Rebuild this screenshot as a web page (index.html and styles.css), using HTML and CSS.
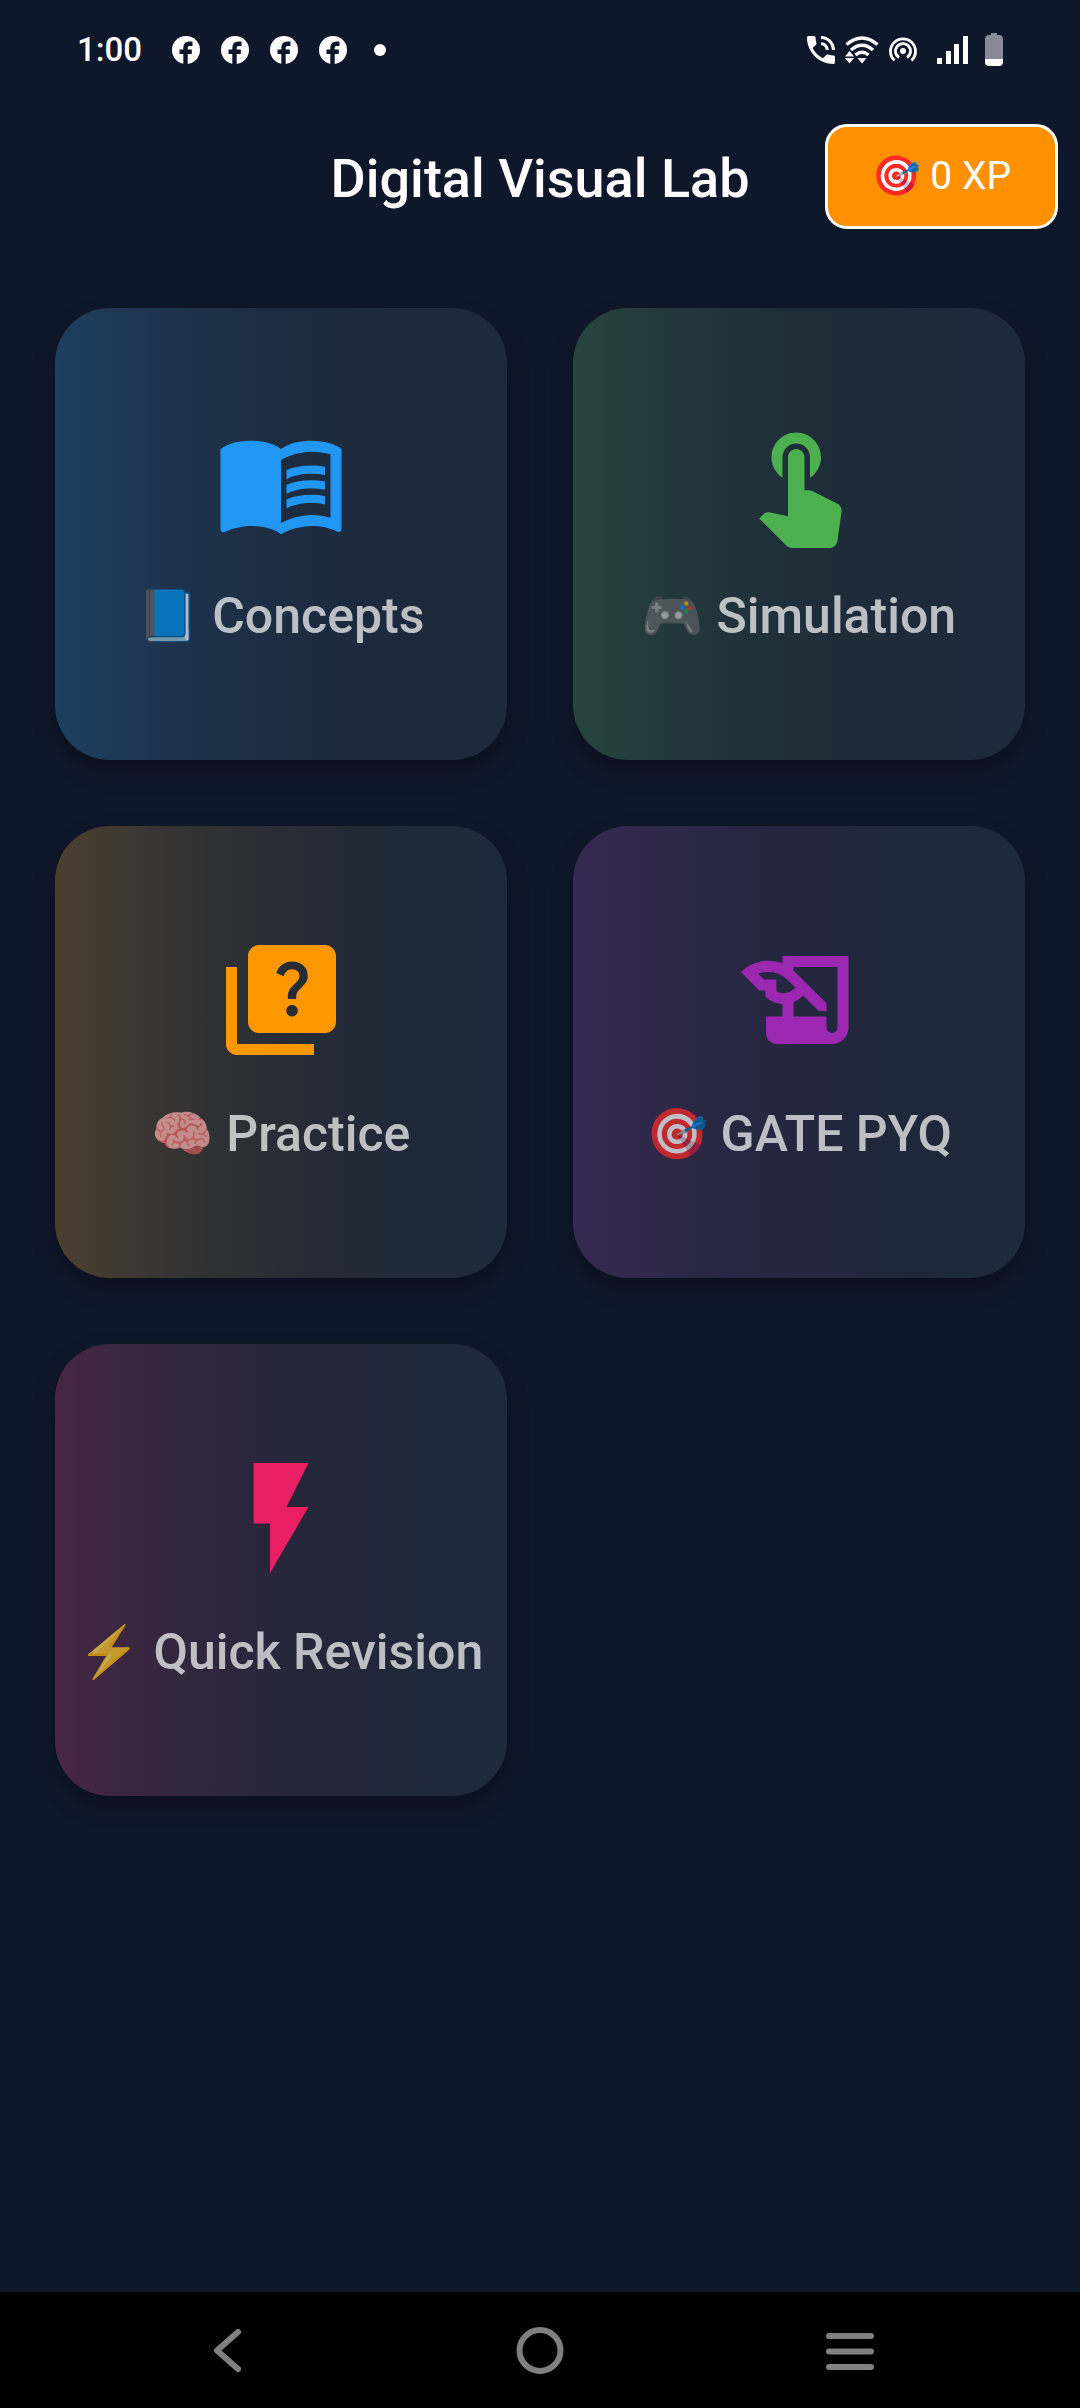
FILE: index.html
```html
<!DOCTYPE html>
<html lang="en">
<head>
  <meta charset="UTF-8" />
  <meta name="viewport" content="width=device-width, initial-scale=1.0"/>
  <title>Digital Visual Lab</title>
  <link rel="stylesheet" href="styles.css">
</head>
<body>

  <!-- shared shape for the notification icons -->
  <svg class="sprite" aria-hidden="true">
    <symbol id="fb" viewBox="0 0 28 28">
      <circle cx="14" cy="14" r="14" fill="#fff"/>
      <path d="M13.5 28.5V12q0-4.200 4-4.200h3M7.500 15.800h12.300" fill="none" stroke="#0f172a" stroke-width="4.400"/>
    </symbol>
  </svg>

  <!-- STATUS BAR -->
  <div class="status-bar">
    <span class="clock">1:00</span>
    <div class="notifications">
      <svg class="fb-icon"><use href="#fb"/></svg>
      <svg class="fb-icon"><use href="#fb"/></svg>
      <svg class="fb-icon"><use href="#fb"/></svg>
      <svg class="fb-icon"><use href="#fb"/></svg>
      <span class="dot"></span>
    </div>
    <div class="system-icons">
      <svg width="28" height="28" viewBox="3 3 18 18" fill="#fff"><path d="M20 15.500c-1.250 0-2.450-.2-3.570-.57-.35-.11-.74-.03-1.020.24l-2.200 2.200c-2.830-1.440-5.150-3.750-6.590-6.590l2.200-2.210c.28-.26.36-.65.25-1C8.700 6.450 8.500 5.250 8.500 4c0-.55-.45-1-1-1H4c-.55 0-1 .45-1 1 0 9.390 7.610 17 17 17 .55 0 1-.45 1-1v-3.500c0-.55-.45-1-1-1zM19 12h2c0-4.970-4.030-9-9-9v2c3.870 0 7 3.130 7 7zm-4 0h2c0-2.760-2.240-5-5-5v2c1.660 0 3 1.340 3 3z"/></svg>
      <svg width="34" height="28" viewBox="0 0 34 28">
        <g fill="none" stroke="#fff" stroke-width="3.500">
          <path d="M1.500 8.500Q17-4.500 32.500 8.500"/>
          <path d="M6 14Q17 4.500 28 14"/>
          <path d="M10.500 19Q17 13.500 23.500 19"/>
        </g>
        <path d="M0 20.500L4.500 15l4.500 5.500zM0 22h9l-4.500 5.500zM12.500 22h9L17 27.500z" fill="#fff"/>
      </svg>
      <svg width="28" height="28" viewBox="0 0 28 28">
        <circle cx="14" cy="15" r="3" fill="#fff"/>
        <g fill="none" stroke="#fff" stroke-width="2.800">
          <path d="M10 21.500a7.500 7.500 0 1 1 8 0"/>
          <path d="M5.500 24.500a12.500 12.500 0 1 1 17 0"/>
        </g>
      </svg>
      <svg class="signal" width="32" height="28" viewBox="0 0 32 28" fill="#fff"><path d="M0 22h5v6H0zM9 15h5v13H9zM17 8h5v20h-5zM26 0h5v28h-5z"/></svg>
      <svg class="battery" width="18" height="33" viewBox="0 0 18 33">
        <path d="M6 0h6v2h2q4 0 4 4v20H0V6q0-4 4-4h2z" fill="#878b98"/>
        <path d="M0 26h18v3q0 4-4 4H4q-4 0-4-4z" fill="#fff"/>
      </svg>
    </div>
  </div>

  <header>
    <h1>Digital Visual Lab</h1>
    <div class="xp-badge">🎯 0 XP</div>
  </header>

  <main class="card-grid">
    <button class="card concepts">
      <svg class="card-icon" viewBox="0 0 24 24"><path d="M21 5c-1.110-.35-2.330-.5-3.500-.5-1.950 0-4.050.4-5.500 1.500-1.450-1.100-3.550-1.500-5.500-1.500S2.450 4.900 1 6v14.650c0 .25.25.5.5.5.1 0 .15-.05.25-.05C3.100 20.450 5.050 20 6.500 20c1.950 0 4.050.4 5.500 1.500 1.350-.85 3.800-1.500 5.500-1.500 1.650 0 3.350.3 4.750 1.050.1.05.15.05.25.05.25 0 .5-.25.5-.5V6c-.6-.45-1.250-.75-2-1zm0 13.500c-1.100-.35-2.300-.5-3.500-.5-1.700 0-4.150.65-5.500 1.500V8c1.350-.85 3.800-1.500 5.500-1.500 1.200 0 2.400.15 3.500.5v11.500z"/><path d="M17.500 10.500c.88 0 1.730.09 2.500.26V9.240c-.79-.15-1.640-.24-2.500-.24-1.700 0-3.240.29-4.500.83v1.660c1.130-.64 2.700-.99 4.500-.99zM13 12.490v1.660c1.130-.64 2.700-.99 4.500-.99.88 0 1.730.09 2.500.26V11.900c-.79-.15-1.640-.24-2.500-.24-1.700 0-3.240.3-4.500.83zM17.500 14.330c-1.700 0-3.240.29-4.500.83v1.660c1.130-.64 2.700-.99 4.500-.99.88 0 1.730.09 2.500.26v-1.520c-.79-.16-1.640-.24-2.500-.24z"/></svg>
      <span>📘 Concepts</span>
    </button>

    <button class="card simulation">
      <svg class="card-icon" viewBox="0 0 24 24"><path d="M9 11.240V7.500C9 6.120 10.120 5 11.500 5S14 6.120 14 7.500v3.740c1.210-.81 2-2.180 2-3.740C16 5.010 13.990 3 11.500 3S7 5.010 7 7.500c0 1.560.79 2.930 2 3.740zm9.840 4.630l-4.540-2.260c-.17-.07-.35-.11-.54-.11H13v-6c0-.83-.67-1.500-1.500-1.500S10 6.670 10 7.500v10.740l-3.430-.72c-.08-.01-.15-.03-.24-.03-.31 0-.59.13-.79.33l-.79.8 4.940 4.940c.27.27.65.44 1.060.44h6.790c.75 0 1.330-.55 1.440-1.280l.75-5.270c.01-.07.02-.14.02-.2 0-.62-.38-1.160-.91-1.380z"/></svg>
      <span>🎮 Simulation</span>
    </button>

    <button class="card practice">
      <svg class="card-icon" viewBox="0 0 24 24"><path d="M4 6H2v14c0 1.100.9 2 2 2h14v-2H4V6z"/><path d="M20 2H8c-1.100 0-2 .9-2 2v12c0 1.100.9 2 2 2h12c1.100 0 2-.9 2-2V4c0-1.100-.9-2-2-2zm-5.990 13c-.59 0-1.050-.47-1.050-1.050 0-.59.47-1.040 1.050-1.040.59 0 1.040.45 1.040 1.040-.01.58-.45 1.050-1.040 1.050zm2.500-6.170c-.63.93-1.230 1.210-1.560 1.810-.13.24-.18.4-.18 1.180h-1.520c0-.41-.06-1.080.26-1.650.41-.73 1.180-1.160 1.630-1.800.48-.68.21-1.940-1.140-1.940-.88 0-1.320.67-1.500 1.230l-1.370-.57C11.510 5.960 12.520 5 13.990 5c1.230 0 2.080.56 2.510 1.260.37.61.58 1.730.01 2.570z"/></svg>
      <span>🧠 Practice</span>
    </button>

    <button class="card gate">
      <svg class="card-icon" viewBox="0 0 24 24"><path d="M9 4v1.380c-.83-.33-1.720-.5-2.610-.5-1.790 0-3.580.68-4.950 2.050l3.330 3.330h1.110v1.110c.86.86 1.980 1.310 3.110 1.360V15H6v3c0 1.100.9 2 2 2h10c1.660 0 3-1.340 3-3V4H9zm-1.110 6.410V8.260H5.610L4.570 7.220c.57-.22 1.190-.33 1.820-.33 1.350 0 2.610.53 3.560 1.470l1.410 1.410-.2.2c-.51.51-1.190.8-1.920.8-.47 0-.93-.12-1.350-.36zM19 17c0 .55-.45 1-1 1s-1-.45-1-1v-2h-6v-2.590c.57-.23 1.100-.57 1.560-1.030l.2-.2L15.590 14H17v-1.410l-6-5.970V6h8v11z"/></svg>
      <span>🎯 GATE PYQ</span>
    </button>

    <button class="card revision">
      <svg class="card-icon" viewBox="0 0 24 24"><path d="M7 2v11h3v9l7-12h-4l4-8z"/></svg>
      <span>⚡ Quick Revision</span>
    </button>
  </main>

  <!-- SYSTEM NAVIGATION -->
  <nav class="nav-bar">
    <button aria-label="Back">
      <svg width="48" height="48" viewBox="0 0 48 48"><path d="M32 6L11 24.500 32 43"/></svg>
    </button>
    <button aria-label="Home">
      <svg width="48" height="48" viewBox="0 0 48 48"><circle cx="24" cy="24.500" r="20.500"/></svg>
    </button>
    <button aria-label="Recent apps">
      <svg width="48" height="48" viewBox="0 0 48 48"><path d="M3 10h42M3 25.500h42M3 41h42"/></svg>
    </button>
  </nav>

</body>
</html>
```
FILE: styles.css
```css
* {
  margin: 0; padding: 0;
  box-sizing: border-box;
  font-family: 'Roboto', 'Noto Color Emoji', sans-serif;
}

body {
  min-height: 100vh;
  display: flex;
  flex-direction: column;
  background-color: #0f172a;
  color: white;
}

button {
  border: none;
  background: none;
  cursor: pointer;
}

.sprite {
  display: none;
}

/* Status bar */
.status-bar {
  display: flex;
  align-items: center;
  height: 99px;
  padding: 0 77px;
}

.clock {
  font-size: 33px;
  font-weight: 500;
  line-height: 40px;
}

.notifications {
  display: flex;
  align-items: center;
  gap: 21px;
  margin-left: 30px;
}

.fb-icon {
  width: 28px;
  height: 28px;
}

.dot {
  width: 12px;
  height: 12px;
  margin-left: 6px;
  border-radius: 50%;
  background-color: white;
}

.system-icons {
  display: flex;
  align-items: center;
  gap: 10px;
  margin-left: auto;
}

.signal {
  margin-left: 10px;
}

.battery {
  margin-left: 6px;
}

/* App bar */
header {
  display: grid;
  grid-template-columns: 1fr auto 1fr;
  align-items: center;
  height: 154px;
  padding: 0 22px;
}

h1 {
  grid-column: 2;
  padding-top: 4px;
  font-size: 54px;
  font-weight: 500;
}

.xp-badge {
  justify-self: end;
  padding: 27px 44px;
  border: 3px solid white;
  border-radius: 22px;
  background-color: #ff9000;
  font-size: 39px;
  line-height: 45px;
  white-space: nowrap;
}

/* Cards */
.card-grid {
  flex: 1;
  display: grid;
  grid-template-columns: 1fr 1fr;
  align-content: start;
  gap: 66px;
  padding: 55px;
}

.card {
  display: flex;
  flex-direction: column;
  align-items: center;
  justify-content: center;
  gap: 38px;
  aspect-ratio: 1;
  padding-bottom: 6px;
  border-radius: 55px;
  background-color: #1e293b;
  background-image: linear-gradient(to right, var(--tint-1), var(--tint-2), var(--tint-3), var(--tint-4), transparent);
  box-shadow: 0 11px 22px rgba(0, 0, 0, 0.3);
  color: rgba(255, 255, 255, 0.7);
  font-size: 50px;
  font-weight: 500;
  line-height: 60px;
  white-space: nowrap;
}

.card-icon {
  width: 132px;
  height: 132px;
  fill: var(--accent);
}

.concepts {
  --accent: #2196f3;
  --tint-1: rgba(33, 150, 243, 0.2);
  --tint-2: rgba(25, 112, 182, 0.15);
  --tint-3: rgba(16, 75, 121, 0.1);
  --tint-4: rgba(8, 38, 61, 0.05);
}

.simulation {
  --accent: #4caf50;
  --tint-1: rgba(76, 175, 80, 0.2);
  --tint-2: rgba(57, 131, 60, 0.15);
  --tint-3: rgba(38, 88, 40, 0.1);
  --tint-4: rgba(19, 44, 20, 0.05);
}

.practice {
  --accent: #ff9800;
  --tint-1: rgba(255, 152, 0, 0.2);
  --tint-2: rgba(191, 114, 0, 0.15);
  --tint-3: rgba(128, 76, 0, 0.1);
  --tint-4: rgba(64, 38, 0, 0.05);
}

.gate {
  --accent: #9c27b0;
  --tint-1: rgba(156, 39, 176, 0.2);
  --tint-2: rgba(117, 29, 132, 0.15);
  --tint-3: rgba(78, 20, 88, 0.1);
  --tint-4: rgba(39, 10, 44, 0.05);
}

.revision {
  --accent: #e91e63;
  --tint-1: rgba(233, 30, 99, 0.2);
  --tint-2: rgba(175, 23, 74, 0.15);
  --tint-3: rgba(116, 15, 50, 0.1);
  --tint-4: rgba(58, 8, 25, 0.05);
}

/* Bottom navigation */
.nav-bar {
  display: flex;
  align-items: center;
  justify-content: space-between;
  height: 116px;
  padding: 0 206px;
  background-color: black;
}

.nav-bar button {
  display: flex;
}

.nav-bar svg {
  fill: none;
  stroke: #808080;
  stroke-width: 6;
  stroke-linecap: round;
  stroke-linejoin: round;
}
```
